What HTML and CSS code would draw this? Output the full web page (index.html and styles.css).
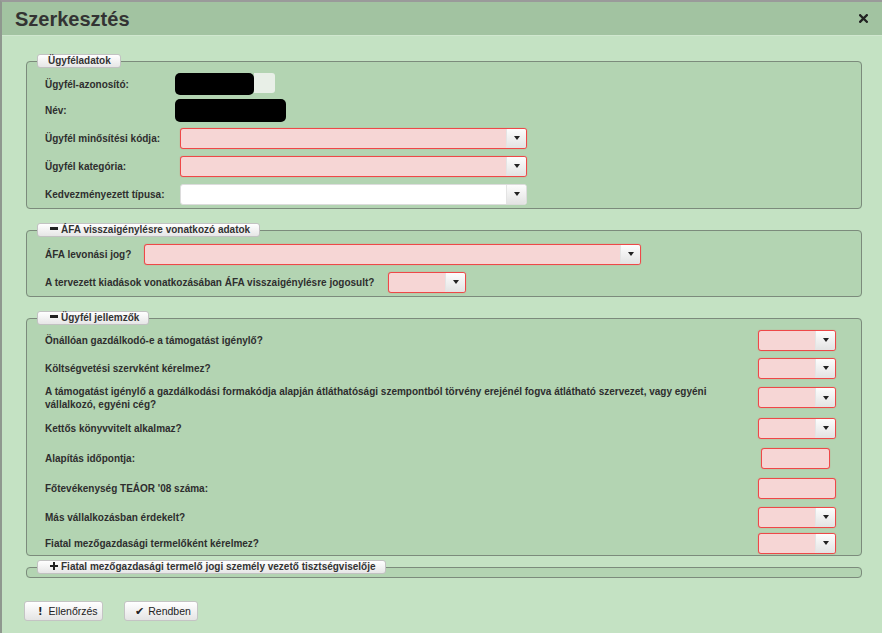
FILE: index.html
```html
<!DOCTYPE html>
<html lang="hu">
<head>
<meta charset="utf-8">
<title>Szerkesztés</title>
<link rel="stylesheet" href="styles.css">
</head>
<body>
<div class="dialog">
  <div class="header">
    <h1 class="title">Szerkesztés</h1>
    <span class="close" aria-label="Bezárás">
      <svg width="9" height="9" viewBox="0 0 9 9"><path d="M1.2 1.2 L7.8 7.8 M7.8 1.2 L1.2 7.8" stroke="#222" stroke-width="2.3" stroke-linecap="square"/></svg>
    </span>
  </div>
  <div class="content">
    <fieldset class="group">
      <legend class="legend">Ügyféladatok</legend>
      <div class="row h27 top5">
        <span class="label lbl-130">Ügyfél-azonosító:</span>
        <span class="redact redact-a"></span><span class="id-tail"></span>
      </div>
      <div class="row h27">
        <span class="label lbl-130">Név:</span>
        <span class="redact redact-b"></span>
      </div>
      <div class="row h28">
        <span class="label lbl-135">Ügyfél minősítési kódja:</span>
        <div class="select invalid w347"><span class="caret"></span></div>
      </div>
      <div class="row h28">
        <span class="label lbl-135">Ügyfél kategória:</span>
        <div class="select invalid w347"><span class="caret"></span></div>
      </div>
      <div class="row h28">
        <span class="label lbl-135">Kedvezményezett típusa:</span>
        <div class="select w347"><span class="caret"></span></div>
      </div>
    </fieldset>

    <fieldset class="group pad3">
      <legend class="legend"><span class="ico-minus"></span>ÁFA visszaigénylésre vonatkozó adatok</legend>
      <div class="row h28">
        <span class="label lbl-99">ÁFA levonási jog?</span>
        <div class="select invalid w497"><span class="caret"></span></div>
      </div>
      <div class="row h28">
        <span class="label lbl-343">A tervezett kiadások vonatkozásában ÁFA visszaigénylésre jogosult?</span>
        <div class="select invalid w78"><span class="caret"></span></div>
      </div>
    </fieldset>

    <fieldset class="group pad1">
      <legend class="legend"><span class="ico-minus"></span>Ügyfél jellemzők</legend>
      <div class="row spread h28">
        <span class="label">Önállóan gazdálkodó-e a támogatást igénylő?</span>
        <div class="ctrl"><div class="select invalid w78"><span class="caret"></span></div></div>
      </div>
      <div class="row spread h28">
        <span class="label">Költségvetési szervként kérelmez?</span>
        <div class="ctrl"><div class="select invalid w78"><span class="caret"></span></div></div>
      </div>
      <div class="row spread h31">
        <span class="label">A támogatást igénylő a gazdálkodási formakódja alapján átláthatósági szempontból törvény erejénél fogva átlátható szervezet, vagy egyéni<br>vállalkozó, egyéni cég?</span>
        <div class="ctrl"><div class="select invalid w78"><span class="caret"></span></div></div>
      </div>
      <div class="row spread h30">
        <span class="label">Kettős könyvvitelt alkalmaz?</span>
        <div class="ctrl"><div class="select invalid w78"><span class="caret"></span></div></div>
      </div>
      <div class="row spread h30">
        <span class="label">Alapítás időpontja:</span>
        <div class="ctrl"><div class="textbox invalid w69"></div></div>
      </div>
      <div class="row spread h30">
        <span class="label">Főtevékenység TEÁOR '08 száma:</span>
        <div class="ctrl"><div class="textbox invalid w78"></div></div>
      </div>
      <div class="row spread h28">
        <span class="label">Más vállalkozásban érdekelt?</span>
        <div class="ctrl"><div class="select invalid w78"><span class="caret"></span></div></div>
      </div>
      <div class="row spread h24">
        <span class="label">Fiatal mezőgazdasági termelőként kérelmez?</span>
        <div class="ctrl"><div class="select invalid w78"><span class="caret"></span></div></div>
      </div>
    </fieldset>

    <fieldset class="group collapsed">
      <legend class="legend"><span class="ico-plus"></span>Fiatal mezőgazdasági termelő jogi személy vezető tisztségviselője</legend>
    </fieldset>

    <div class="actions">
      <button class="btn btn-check"><span class="btn-ico excl">!</span>Ellenőrzés</button>
      <button class="btn btn-ok"><span class="btn-ico check">✔</span>Rendben</button>
    </div>
  </div>
</div>
</body>
</html>
```

FILE: styles.css
```css
* { box-sizing: border-box; }
html, body { margin: 0; padding: 0; }
body {
  width: 882px;
  height: 633px;
  overflow: hidden;
  background: #c4e2c3;
  font-family: "Liberation Sans", Arial, sans-serif;
  color: #2e2e2e;
}
.dialog {
  height: 633px;
  border-left: 2px solid #8f988f;
  border-top: 2px solid #9a9a9a;
}
.header {
  height: 34px;
  background: #a2c3a1;
  border-bottom: 1px solid #d0e7cf;
  display: flex;
  align-items: center;
  justify-content: space-between;
  padding: 2px 14px 0 13px;
}
.title {
  margin: 0;
  font-size: 20px;
  font-weight: bold;
  color: #333;
  line-height: 23px;
}
.close { display: flex; width: 9px; height: 9px; margin-top: -2px; }

.content { padding: 18px 20px 0 24px; }

.group {
  margin: 0;
  min-width: 0;
  padding: 2px 25px 0 10px;
  border: 1px solid #7c8b7c;
  border-radius: 4px;
  background: #b3d4b2;
}
.group + .group { margin-top: 14px; }
.group.pad3 { padding-top: 3px; }
.group.pad1 { padding-top: 1px; }
.group.collapsed { margin-top: 4px; padding: 0 25px 3px 10px; }

.legend {
  padding: 0 9px 0 10px;
  height: 14px;
  line-height: 12px;
  border: 1px solid #c2c2c2;
  border-radius: 3px;
  background: linear-gradient(#ffffff, #e6e6e6);
  font-size: 10px;
  font-weight: bold;
  color: #333;
  white-space: nowrap;
}
.ico-minus {
  display: inline-block;
  width: 8px;
  height: 3px;
  background: #222;
  vertical-align: 3px;
  margin: 0 3px 0 2px;
}
.ico-plus {
  display: inline-block;
  width: 8px;
  height: 8px;
  vertical-align: 0px;
  margin: 0 3px 0 2px;
  background:
    linear-gradient(#222, #222) center / 8px 2.4px no-repeat,
    linear-gradient(#222, #222) center / 2.4px 8px no-repeat;
}

.row {
  display: flex;
  align-items: center;
  margin-left: 8px;
}
.row.top5 { align-items: flex-start; padding-top: 3px; }
.row.spread { justify-content: space-between; }
.h24 { height: 24px; }
.h27 { height: 27px; }
.h28 { height: 28px; }
.h30 { height: 30px; }
.h31 { height: 31px; }

.label {
  font-size: 10px;
  font-weight: bold;
  line-height: 13px;
  color: #2e2e2e;
}
.row.top5 .label { padding-top: 5px; }
.lbl-130 { width: 130px; flex: none; }
.lbl-135 { width: 135px; flex: none; }
.lbl-99 { width: 99px; flex: none; }
.lbl-343 { width: 343px; flex: none; }

.redact { display: block; background: #000; border-radius: 5px; flex: none; }
.redact-a { width: 79px; height: 22px; }
.redact-b { width: 111px; height: 23px; }
.id-tail {
  display: block;
  width: 21px;
  height: 20px;
  background: #e8efe7;
  border-radius: 0 3px 3px 0;
}

.ctrl { width: 78px; flex: none; display: flex; justify-content: flex-start; }
.ctrl .w69 { margin-left: 3px; }

.select, .textbox {
  height: 21px;
  border: 1px solid #dcdcdc;
  border-radius: 3px;
  background: #fff;
  flex: none;
}
.select { display: flex; justify-content: flex-end; }
.invalid {
  background: #f6d6d5;
  border-color: #ee4848;
  box-shadow: 0 0 1px rgba(238, 60, 60, 0.6);
}
.w347 { width: 347px; }
.w497 { width: 497px; }
.w78 { width: 78px; }
.w69 { width: 69px; }

.caret {
  width: 20px;
  height: 100%;
  background: linear-gradient(#fdfdfd, #e3e3e3);
  border-left: 1px solid #e4e4e4;
  border-radius: 0 2px 2px 0;
  display: flex;
  align-items: center;
  justify-content: center;
}
.caret::after {
  content: "";
  border-left: 3.5px solid transparent;
  border-right: 3.5px solid transparent;
  border-top: 4px solid #222;
}

.actions {
  display: flex;
  gap: 21px;
  margin: 23px 0 0 -2px;
}
.btn {
  height: 20px;
  border: 1px solid #c4c4c4;
  border-radius: 3px;
  background: linear-gradient(#ffffff, #e4e4e4);
  font-family: "Liberation Sans", Arial, sans-serif;
  font-size: 10.5px;
  color: #222;
  display: flex;
  align-items: center;
  padding: 0;
  white-space: nowrap;
}
.btn-check { width: 79px; padding-left: 13px; }
.btn-ok { width: 74px; padding-left: 10px; }
.btn-ico { font-weight: bold; margin-right: 4px; }
.excl { font-family: "DejaVu Sans", sans-serif; font-size: 10px; margin-right: 6px; }
.check { font-family: "DejaVu Sans", sans-serif; font-size: 11px; margin-right: 4px; }
```
